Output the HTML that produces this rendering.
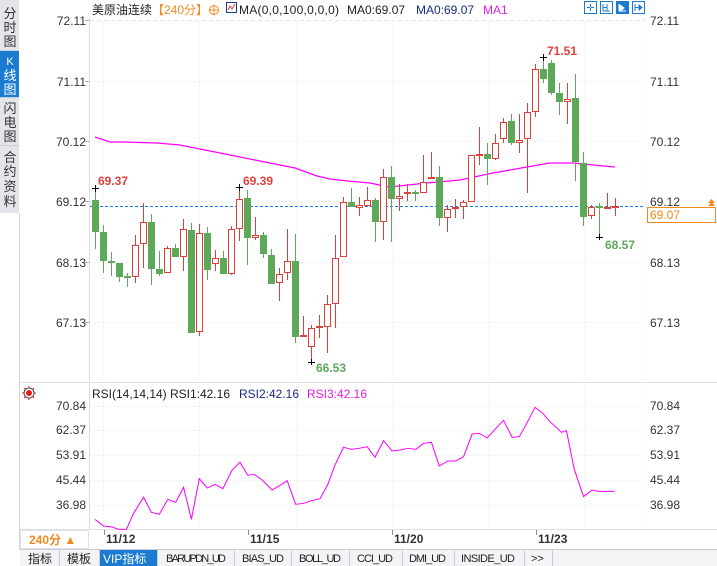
<!DOCTYPE html>
<html><head><meta charset="utf-8"><style>
body{margin:0;width:717px;height:566px;overflow:hidden;background:#fff;font-family:"Liberation Sans","Noto Sans CJK SC",sans-serif}
svg{position:absolute;left:0;top:0}
text{font-family:"Liberation Sans","Noto Sans CJK SC",sans-serif}
.ax{font-size:12px;fill:#333}
.r{fill:#fff;stroke:#e0403a;stroke-width:1}
.g{fill:#5ea85a}
.wr{stroke:#e0403a;stroke-width:1}
.wg{stroke:#5ea85a;stroke-width:1}
.grid{stroke:#e4e4e4;stroke-dasharray:1 3;stroke-width:1}
.tab{font-size:11px;fill:#222;font-family:"Liberation Mono","Noto Sans CJK SC",monospace}
</style></head><body>
<svg width="717" height="566" viewBox="0 0 717 566">
<rect x="0" y="0" width="19" height="213" fill="#e3e5eb"/>
<rect x="0" y="51" width="19" height="46" fill="#1a7bd0"/>
<line x1="0" y1="50.5" x2="19" y2="50.5" stroke="#c8ccd6"/>
<line x1="0" y1="97.5" x2="19" y2="97.5" stroke="#c8ccd6"/>
<line x1="0" y1="145.5" x2="19" y2="145.5" stroke="#c8ccd6"/>
<line x1="19.5" y1="213" x2="19.5" y2="550" stroke="#d0d4dc"/>
<g font-size="13" fill="#333" text-anchor="middle">
<text x="10" y="18">分</text><text x="10" y="32">时</text><text x="10" y="46">图</text>
<text x="10" y="65" fill="#fff" font-size="11">K</text><text x="10" y="80" fill="#fff">线</text><text x="10" y="94" fill="#fff">图</text>
<text x="10" y="113">闪</text><text x="10" y="127">电</text><text x="10" y="141">图</text>
<text x="10" y="162">合</text><text x="10" y="176">约</text><text x="10" y="191">资</text><text x="10" y="206">料</text>
</g>
<line x1="89.5" y1="18" x2="89.5" y2="529" stroke="#d8dce4"/>
<line x1="645.5" y1="18" x2="645.5" y2="529" stroke="#e8e8e8" stroke-dasharray="1 3"/>
<line x1="20" y1="382.5" x2="717" y2="382.5" stroke="#dde1e8"/>
<line x1="20" y1="529.5" x2="717" y2="529.5" stroke="#dde1e8"/>
<line x1="20" y1="549.5" x2="717" y2="549.5" stroke="#c8ccd6"/>
<g class="grid">
<line x1="90" y1="20.5" x2="645" y2="20.5" stroke-dasharray="4 3"/>
<line x1="90" y1="81.5" x2="645" y2="81.5"/><line x1="90" y1="141.5" x2="645" y2="141.5"/>
<line x1="90" y1="201.5" x2="645" y2="201.5"/><line x1="90" y1="262.5" x2="645" y2="262.5"/>
<line x1="90" y1="322.5" x2="645" y2="322.5"/>
<line x1="90" y1="406.5" x2="645" y2="406.5"/><line x1="90" y1="430.5" x2="645" y2="430.5"/>
<line x1="90" y1="455.5" x2="645" y2="455.5"/><line x1="90" y1="480.5" x2="645" y2="480.5"/>
<line x1="90" y1="505.5" x2="645" y2="505.5"/>
<line x1="103.5" y1="22" x2="103.5" y2="529"/><line x1="199.5" y1="22" x2="199.5" y2="529"/>
<line x1="296.5" y1="22" x2="296.5" y2="529"/><line x1="392.5" y1="22" x2="392.5" y2="529"/>
<line x1="488.5" y1="22" x2="488.5" y2="529"/><line x1="584.5" y1="22" x2="584.5" y2="529"/>
</g>
<g stroke="#aab" stroke-width="1">
<line x1="85" y1="20.5" x2="89" y2="20.5"/><line x1="85" y1="81.5" x2="89" y2="81.5"/><line x1="85" y1="141.5" x2="89" y2="141.5"/><line x1="85" y1="201.5" x2="89" y2="201.5"/><line x1="85" y1="262.5" x2="89" y2="262.5"/><line x1="85" y1="322.5" x2="89" y2="322.5"/>
</g>
<g class="ax" text-anchor="end">
<text x="86" y="25">72.11</text><text x="86" y="86">71.11</text><text x="86" y="146">70.12</text>
<text x="86" y="206">69.12</text><text x="86" y="267">68.13</text><text x="86" y="327">67.13</text>
<text x="86" y="410">70.84</text><text x="86" y="434">62.37</text><text x="86" y="459">53.91</text>
<text x="86" y="484">45.44</text><text x="86" y="509">36.98</text>
</g>
<g class="ax">
<text x="650" y="25">72.11</text><text x="650" y="86">71.11</text><text x="650" y="146">70.12</text>
<text x="650" y="206">69.12</text><text x="650" y="267">68.13</text><text x="650" y="327">67.13</text>
<text x="650" y="410">70.84</text><text x="650" y="434">62.37</text><text x="650" y="459">53.91</text>
<text x="650" y="484">45.44</text><text x="650" y="509">36.98</text>
</g>
<text x="92" y="14" font-size="12" fill="#222">美原油连续</text>
<text x="152" y="14" font-size="12" fill="#f08a20">【240分】</text>
<circle cx="214" cy="10" r="4.5" fill="none" stroke="#f08a20"/><line x1="209.5" y1="10" x2="218.5" y2="10" stroke="#f08a20"/><line x1="214" y1="5.5" x2="214" y2="14.5" stroke="#f08a20"/>
<rect x="226.5" y="2.5" width="10" height="10" fill="#fff" stroke="#1a3a8a"/><polyline points="228,10 230,6 232,9 235,4" fill="none" stroke="#e0403a"/>
<text x="239" y="14" font-size="12" fill="#222" textLength="100">MA(0,0,100,0,0,0)</text>
<text x="347" y="14" font-size="12" fill="#222">MA0:69.07</text>
<text x="416" y="14" font-size="12" fill="#1a2a80">MA0:69.07</text>
<text x="483" y="14" font-size="12" fill="#e020e0">MA1</text>
<g stroke="#1a7bd0" fill="#fff">
<rect x="584.5" y="1.5" width="12" height="12"/><rect x="600.5" y="1.5" width="12" height="12"/>
<rect x="616.5" y="1.5" width="12" height="12" fill="#1a7bd0"/><rect x="632.5" y="1.5" width="12" height="12"/>
<path d="M590.5 4v3M590.5 8v3M587 7.5h3M591 7.5h3M603 4v7M607 4v7M603 7.5h4M603 11h7M635 4v7M635 7.5h6"/>
<path d="M619 4v7M619 11h7M620 5l4 3-4 3z" stroke="#fff" fill="#fff"/>
<path d="M639 5l3 2.5-3 2.5z" fill="#1a7bd0"/>
</g>
<polyline points="95,137 110,142 124,142 157,143 180,145 200,149 240,157 270,163 295,168 317,176 330,179 348,181 370,183 389,187 427,183 460,180 493,173 527,167 550,163 573,163 593,165 615,167" fill="none" stroke="#ff00ff" stroke-width="1.3"/>
<line x1="90" y1="206.5" x2="645" y2="206.5" stroke="#1a7bf0" stroke-dasharray="3 2"/>
<rect x="647.5" y="207.5" width="68" height="15" fill="#fff" stroke="#f08a20"/>
<text x="650" y="219" font-size="12" fill="#f08a20">69.07</text>
<path d="M708 203l3.5-4 3.5 4zM708 206l3.5-4 3.5 4z" fill="#f08a20"/>
<g>
<line class="wg" x1="95.5" y1="188" x2="95.5" y2="249"/><rect class="g" x="92" y="200" width="7" height="32"/>
<line class="wg" x1="103.5" y1="225" x2="103.5" y2="273"/><rect class="g" x="100" y="232" width="7" height="29"/>
<line class="wg" x1="111.5" y1="252" x2="111.5" y2="276"/><rect class="g" x="108" y="261" width="7" height="2"/>
<line class="wg" x1="119.5" y1="263" x2="119.5" y2="282"/><rect class="g" x="116" y="263" width="7" height="14"/>
<line class="wg" x1="127.5" y1="273" x2="127.5" y2="287"/><rect class="g" x="124" y="276" width="7" height="2"/>
<line class="wr" x1="135.5" y1="235" x2="135.5" y2="283"/><rect class="r" x="132.5" y="245.5" width="6" height="31"/>
<line class="wr" x1="143.5" y1="203" x2="143.5" y2="268"/><rect class="r" x="140.5" y="222.5" width="6" height="21"/>
<line class="wg" x1="151.5" y1="214" x2="151.5" y2="285"/><rect class="g" x="148" y="222" width="7" height="47"/>
<line class="wg" x1="159.5" y1="251" x2="159.5" y2="276"/><rect class="g" x="156" y="269" width="7" height="5"/>
<line class="wr" x1="167.5" y1="246" x2="167.5" y2="273"/><rect class="r" x="164.5" y="248.5" width="6" height="24"/>
<line class="wg" x1="175.5" y1="244" x2="175.5" y2="257"/><rect class="g" x="172" y="248" width="7" height="9"/>
<line class="wr" x1="183.5" y1="219" x2="183.5" y2="271"/><rect class="r" x="180.5" y="229.5" width="6" height="27"/>
<line class="wg" x1="191.5" y1="223" x2="191.5" y2="333"/><rect class="g" x="188" y="230" width="7" height="103"/>
<line class="wr" x1="199.5" y1="224" x2="199.5" y2="336"/><rect class="r" x="196.5" y="233.5" width="6" height="98"/>
<line class="wg" x1="207.5" y1="227" x2="207.5" y2="280"/><rect class="g" x="204" y="233" width="7" height="37"/>
<line class="wr" x1="215.5" y1="250" x2="215.5" y2="271"/><rect class="r" x="212.5" y="258.5" width="6" height="5"/>
<line class="wg" x1="223.5" y1="251" x2="223.5" y2="274"/><rect class="g" x="220" y="258" width="7" height="16"/>
<line class="wr" x1="231.5" y1="226" x2="231.5" y2="275"/><rect class="r" x="228.5" y="229.5" width="6" height="44"/>
<line class="wr" x1="239.5" y1="187" x2="239.5" y2="241"/><rect class="r" x="236.5" y="199.5" width="6" height="29"/>
<line class="wg" x1="247.5" y1="190" x2="247.5" y2="265"/><rect class="g" x="244" y="198" width="7" height="40"/>
<line class="wr" x1="255.5" y1="217" x2="255.5" y2="240"/><rect class="r" x="252.5" y="235.5" width="6" height="2"/>
<line class="wg" x1="263.5" y1="232" x2="263.5" y2="258"/><rect class="g" x="260" y="235" width="7" height="19"/>
<line class="wg" x1="271.5" y1="249" x2="271.5" y2="284"/><rect class="g" x="268" y="255" width="7" height="29"/>
<line class="wr" x1="279.5" y1="268" x2="279.5" y2="301"/><rect class="r" x="276.5" y="274.5" width="6" height="8"/>
<line class="wr" x1="287.5" y1="229" x2="287.5" y2="280"/><rect class="r" x="284.5" y="261.5" width="6" height="11"/>
<line class="wg" x1="295.5" y1="234" x2="295.5" y2="343"/><rect class="g" x="292" y="261" width="7" height="76"/>
<line class="wr" x1="303.5" y1="316" x2="303.5" y2="337"/><rect x="300" y="335" width="7" height="2" fill="#e0403a"/>
<line class="wr" x1="311.5" y1="325" x2="311.5" y2="362"/><rect class="r" x="308.5" y="328.5" width="6" height="18"/>
<line class="wr" x1="319.5" y1="315" x2="319.5" y2="338"/><rect x="316" y="326" width="7" height="2" fill="#e0403a"/>
<line class="wr" x1="327.5" y1="295" x2="327.5" y2="353"/><rect class="r" x="324.5" y="304.5" width="6" height="22"/>
<line class="wr" x1="335.5" y1="235" x2="335.5" y2="328"/><rect class="r" x="332.5" y="258.5" width="6" height="45"/>
<line class="wr" x1="343.5" y1="197" x2="343.5" y2="257"/><rect class="r" x="340.5" y="202.5" width="6" height="54"/>
<line class="wg" x1="351.5" y1="188" x2="351.5" y2="207"/><rect class="g" x="348" y="202" width="7" height="5"/>
<line class="wr" x1="359.5" y1="197" x2="359.5" y2="216"/><rect class="r" x="356.5" y="205.5" width="6" height="2"/>
<line class="wr" x1="367.5" y1="187" x2="367.5" y2="206"/><rect class="r" x="364.5" y="200.5" width="6" height="5"/>
<line class="wg" x1="375.5" y1="198" x2="375.5" y2="242"/><rect class="g" x="372" y="200" width="7" height="22"/>
<line class="wr" x1="383.5" y1="169" x2="383.5" y2="240"/><rect class="r" x="380.5" y="177.5" width="6" height="44"/>
<line class="wg" x1="391.5" y1="166" x2="391.5" y2="242"/><rect class="g" x="388" y="177" width="7" height="22"/>
<line class="wr" x1="399.5" y1="184" x2="399.5" y2="211"/><rect class="r" x="396.5" y="196.5" width="6" height="2"/>
<line class="wr" x1="407.5" y1="184" x2="407.5" y2="201"/><rect x="404" y="192" width="7" height="2" fill="#e0403a"/>
<line class="wg" x1="415.5" y1="190" x2="415.5" y2="201"/><rect class="g" x="412" y="192" width="7" height="2"/>
<line class="wr" x1="423.5" y1="155" x2="423.5" y2="193"/><rect class="r" x="420.5" y="182.5" width="6" height="10"/>
<line class="wr" x1="431.5" y1="152" x2="431.5" y2="179"/><rect x="428" y="177" width="7" height="2" fill="#e0403a"/>
<line class="wg" x1="439.5" y1="166" x2="439.5" y2="226"/><rect class="g" x="436" y="177" width="7" height="41"/>
<line class="wr" x1="447.5" y1="205" x2="447.5" y2="232"/><rect class="r" x="444.5" y="209.5" width="6" height="8"/>
<line class="wr" x1="455.5" y1="199" x2="455.5" y2="218"/><rect x="452" y="207" width="7" height="2" fill="#e0403a"/>
<line class="wr" x1="463.5" y1="200" x2="463.5" y2="219"/><rect class="r" x="460.5" y="202.5" width="6" height="4"/>
<line class="wr" x1="471.5" y1="155" x2="471.5" y2="202"/><rect class="r" x="468.5" y="155.5" width="6" height="46"/>
<line class="wr" x1="479.5" y1="127" x2="479.5" y2="165"/><rect x="476" y="154" width="7" height="2" fill="#e0403a"/>
<line class="wg" x1="487.5" y1="143" x2="487.5" y2="185"/><rect class="g" x="484" y="154" width="7" height="5"/>
<line class="wr" x1="495.5" y1="134" x2="495.5" y2="160"/><rect class="r" x="492.5" y="143.5" width="6" height="15"/>
<line class="wr" x1="503.5" y1="118" x2="503.5" y2="143"/><rect class="r" x="500.5" y="122.5" width="6" height="16"/>
<line class="wg" x1="511.5" y1="114" x2="511.5" y2="145"/><rect class="g" x="508" y="121" width="7" height="22"/>
<line class="wr" x1="519.5" y1="114" x2="519.5" y2="153"/><rect class="r" x="516.5" y="140.5" width="6" height="2"/>
<line class="wr" x1="527.5" y1="103" x2="527.5" y2="193"/><rect class="r" x="524.5" y="112.5" width="6" height="26"/>
<line class="wr" x1="535.5" y1="64" x2="535.5" y2="117"/><rect class="r" x="532.5" y="69.5" width="6" height="42"/>
<line class="wg" x1="543.5" y1="57" x2="543.5" y2="83"/><rect class="g" x="540" y="69" width="7" height="10"/>
<line class="wg" x1="551.5" y1="60" x2="551.5" y2="95"/><rect class="g" x="548" y="63" width="7" height="30"/>
<line class="wg" x1="559.5" y1="83" x2="559.5" y2="115"/><rect class="g" x="556" y="93" width="7" height="9"/>
<line class="wr" x1="567.5" y1="83" x2="567.5" y2="124"/><rect class="r" x="564.5" y="99.5" width="6" height="2"/>
<line class="wg" x1="575.5" y1="74" x2="575.5" y2="181"/><rect class="g" x="572" y="98" width="7" height="64"/>
<line class="wg" x1="583.5" y1="152" x2="583.5" y2="226"/><rect class="g" x="580" y="163" width="7" height="54"/>
<line class="wr" x1="591.5" y1="205" x2="591.5" y2="219"/><rect class="r" x="588.5" y="207.5" width="6" height="8"/>
<line class="wg" x1="599.5" y1="203" x2="599.5" y2="237"/><rect class="g" x="596" y="206" width="7" height="2"/>
<line class="wr" x1="607.5" y1="193" x2="607.5" y2="209"/><rect x="604" y="207" width="7" height="2" fill="#e0403a"/>
<line class="wr" x1="615.5" y1="198" x2="615.5" y2="216"/><rect x="612" y="206" width="7" height="2" fill="#e0403a"/>
</g>
<g stroke="#000" stroke-width="1">
<path d="M92 188.5h7M95.5 185v7M236 187.5h7M239.5 184v7M540 57.5h7M543.5 54v7M308 362.5h7M311.5 359v6M596 237.5h7M599.5 234v6"/>
</g>
<g font-size="12" font-weight="bold">
<text x="98" y="185" fill="#e0403a">69.37</text>
<text x="243" y="185" fill="#e0403a">69.39</text>
<text x="547" y="55" fill="#e0403a">71.51</text>
<text x="316" y="372" fill="#5ea85a">66.53</text>
<text x="605" y="249" fill="#5ea85a">68.57</text>
</g>
<circle cx="29" cy="393" r="3" fill="#e0201a"/><circle cx="29" cy="393" r="5" fill="none" stroke="#222" stroke-width="0.8"/>
<path d="M29 386v2M29 398v2M22 393h2M34 393h2M24 388l1.5 1.5M34 388l-1.5 1.5M24 398l1.5-1.5M34 398l-1.5-1.5" stroke="#e0201a"/>
<text x="92" y="398" font-size="12" fill="#222" textLength="138">RSI(14,14,14) RSI1:42.16</text>
<text x="239" y="398" font-size="12" fill="#1a2a80" textLength="60">RSI2:42.16</text>
<text x="307" y="398" font-size="12" fill="#e020e0" textLength="60">RSI3:42.16</text>
<g transform="translate(80,380) scale(0.357143,0.33333)">
<polyline fill="none" stroke="#ff00ff" stroke-width="2.9" points="42,418 66,438 90,441 108,448 130,448 150,400 178,352 200,397 222,403 246,358 268,367 290,322 312,418 334,296 356,324 378,313 400,326 426,270 448,247 470,286 488,283 510,300 538,330 560,316 580,302 604,373 626,370 648,362 672,356 694,313 714,255 738,202 760,208 782,205 804,200 826,232 850,182 874,213 896,210 918,205 940,208 962,190 984,187 1006,258 1030,243 1052,243 1074,230 1098,162 1118,160 1140,174 1162,148 1186,121 1210,172 1230,170 1252,128 1274,82 1294,98 1316,125 1336,145 1348,157 1362,152 1384,268 1410,350 1434,330 1452,334 1496,334"/>
</g>
<rect x="20.5" y="530.5" width="68" height="18" fill="#fff" stroke="#dde1e8"/>
<text x="29" y="544" font-size="12" font-weight="bold" fill="#f08a20">240分 ▲</text>
<g stroke="#888"><line x1="104.5" y1="530" x2="104.5" y2="535"/><line x1="248.5" y1="530" x2="248.5" y2="535"/><line x1="392.5" y1="530" x2="392.5" y2="535"/><line x1="536.5" y1="530" x2="536.5" y2="535"/></g>
<g font-size="12" font-weight="bold" fill="#333">
<text x="106" y="543">11/12</text><text x="250" y="543">11/15</text><text x="394" y="543">11/20</text><text x="538" y="543">11/23</text>
</g>
<rect x="20" y="550" width="697" height="16" fill="#f3f4f6"/>
<rect x="99" y="550" width="58" height="16" fill="#1a7bd0"/>
<g stroke="#c8ccd6">
<line x1="59.5" y1="550" x2="59.5" y2="566"/><line x1="99.5" y1="550" x2="99.5" y2="566"/><line x1="157.5" y1="550" x2="157.5" y2="566"/><line x1="234.5" y1="550" x2="234.5" y2="566"/><line x1="291.5" y1="550" x2="291.5" y2="566"/><line x1="349.5" y1="550" x2="349.5" y2="566"/><line x1="402.5" y1="550" x2="402.5" y2="566"/><line x1="454.5" y1="550" x2="454.5" y2="566"/><line x1="524.5" y1="550" x2="524.5" y2="566"/><line x1="552.5" y1="550" x2="552.5" y2="566"/>
</g>
<text x="28" y="563" font-size="12" fill="#222">指标</text>
<text x="67" y="563" font-size="12" fill="#222">模板</text>
<text x="103" y="563" font-size="12" fill="#fff">VIP指标</text>
<g class="tab">
<text x="166" y="562" textLength="60">BARUPDN_UD</text><text x="242" y="562" textLength="42">BIAS_UD</text><text x="299" y="562" textLength="42">BOLL_UD</text>
<text x="357" y="562" textLength="36">CCI_UD</text><text x="409" y="562" textLength="37">DMI_UD</text><text x="461" y="562" textLength="54">INSIDE_UD</text><text x="531" y="562">&gt;&gt;</text>
</g>
</svg>
</body></html>
